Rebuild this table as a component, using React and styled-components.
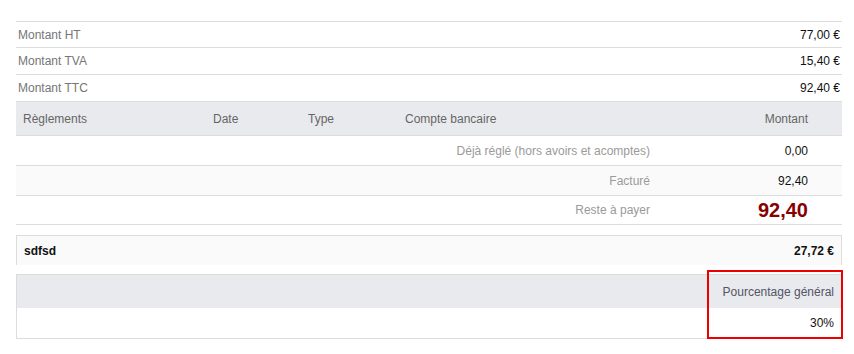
import React from "react";
import styled, { createGlobalStyle } from "styled-components";

const GlobalStyle = createGlobalStyle`
  html, body {
    margin: 0;
    padding: 0;
    background: #ffffff;
  }
  body {
    font-family: "Liberation Sans", Arial, Helvetica, sans-serif;
    font-size: 12px;
    color: #222;
  }
`;

const Page = styled.div`
  padding: 21px 12px 16px 16px;
`;

/* Totals block: HT / TVA / TTC */
const TotalsTable = styled.div`
  display: flex;
  flex-direction: column;
`;

const TotalsRow = styled.div`
  display: flex;
  align-items: center;
  justify-content: space-between;
  height: ${(p) => (p.$first ? "25px" : "26px")};
  border-top: 1px solid #dcdcdc;
  padding: 0 2px;
`;

const TotalsLabel = styled.span`
  color: #767676;
`;

const TotalsValue = styled.span`
  color: #111;
`;

/* Payments table */
const paymentColumns = "191px 95px 97px 257px 158px 28px";

const PaymentHeader = styled.div`
  display: grid;
  grid-template-columns: ${paymentColumns};
  align-items: center;
  height: 33px;
  background: rgb(233, 234, 237);
  border-top: 1px solid #dcdcdc;
  border-bottom: 1px solid #dcdcdc;
`;

const HeaderCell = styled.div`
  padding: 0 6px 0 ${(p) => (p.$first ? "7px" : "6px")};
  color: #666;
  text-align: ${(p) => (p.$right ? "right" : "left")};
`;

const PaymentRow = styled.div`
  display: grid;
  grid-template-columns: ${paymentColumns};
  align-items: center;
  height: ${(p) => (p.$tall ? "28px" : "29px")};
  background: ${(p) => (p.$striped ? "#fafafa" : "#ffffff")};
  border-bottom: 1px solid #dcdcdc;
`;

const RowLabel = styled.div`
  grid-column: 1 / 5;
  text-align: right;
  padding-right: 6px;
  color: #9a9a9a;
`;

const RowValue = styled.div`
  grid-column: 5 / 6;
  text-align: right;
  padding-right: 6px;
  color: ${(p) => (p.$remain ? "#880000" : "#111")};
  font-size: ${(p) => (p.$remain ? "20px" : "12px")};
  font-weight: ${(p) => (p.$remain ? "bold" : "normal")};
`;

/* Commission line */
const CommissionBox = styled.div`
  display: flex;
  align-items: center;
  justify-content: space-between;
  margin-top: 10px;
  height: 29px;
  padding: 0 7px;
  background: #fafafa;
  border: 1px solid #dcdcdc;
  border-bottom: none;
  font-weight: bold;
  color: #111;
`;

/* Percentage table */
const PercentTable = styled.div`
  display: flex;
  margin-top: 9px;
  border: 1px solid #dcdcdc;
`;

const PercentColumn = styled.div`
  position: relative;
  display: flex;
  flex-direction: column;
  flex: ${(p) => (p.$width ? `0 0 ${p.$width}px` : "1 1 auto")};

  ${(p) =>
    p.$highlight &&
    `
    &::after {
      content: "";
      position: absolute;
      top: -5px;
      bottom: -1px;
      left: -2px;
      right: -2px;
      border: 2px solid #ee0000;
      pointer-events: none;
    }
  `}
`;

const PercentHead = styled.div`
  height: 33px;
  display: flex;
  align-items: center;
  justify-content: flex-end;
  padding-right: 7px;
  background: rgb(233, 234, 237);
  color: #535466;
`;

const PercentCell = styled.div`
  height: 30px;
  display: flex;
  align-items: center;
  justify-content: flex-end;
  padding-right: 7px;
  color: #111;
`;

const totals = [
  { label: "Montant HT", value: "77,00 €" },
  { label: "Montant TVA", value: "15,40 €" },
  { label: "Montant TTC", value: "92,40 €" },
];

export default function App() {
  return (
    <>
      <GlobalStyle />
      <Page>
        <TotalsTable>
          {totals.map((t, i) => (
            <TotalsRow key={t.label} $first={i === 0}>
              <TotalsLabel>{t.label}</TotalsLabel>
              <TotalsValue>{t.value}</TotalsValue>
            </TotalsRow>
          ))}
        </TotalsTable>

        <PaymentHeader>
          <HeaderCell $first>Règlements</HeaderCell>
          <HeaderCell>Date</HeaderCell>
          <HeaderCell>Type</HeaderCell>
          <HeaderCell>Compte bancaire</HeaderCell>
          <HeaderCell $right>Montant</HeaderCell>
          <HeaderCell />
        </PaymentHeader>
        <PaymentRow>
          <RowLabel>Déjà réglé (hors avoirs et acomptes)</RowLabel>
          <RowValue>0,00</RowValue>
        </PaymentRow>
        <PaymentRow $striped>
          <RowLabel>Facturé</RowLabel>
          <RowValue>92,40</RowValue>
        </PaymentRow>
        <PaymentRow $tall>
          <RowLabel>Reste à payer</RowLabel>
          <RowValue $remain>92,40</RowValue>
        </PaymentRow>

        <CommissionBox>
          <span>sdfsd</span>
          <span>27,72 €</span>
        </CommissionBox>

        <PercentTable>
          <PercentColumn>
            <PercentHead />
            <PercentCell />
          </PercentColumn>
          <PercentColumn $width={132} $highlight>
            <PercentHead>Pourcentage général</PercentHead>
            <PercentCell>30%</PercentCell>
          </PercentColumn>
        </PercentTable>
      </Page>
    </>
  );
}
